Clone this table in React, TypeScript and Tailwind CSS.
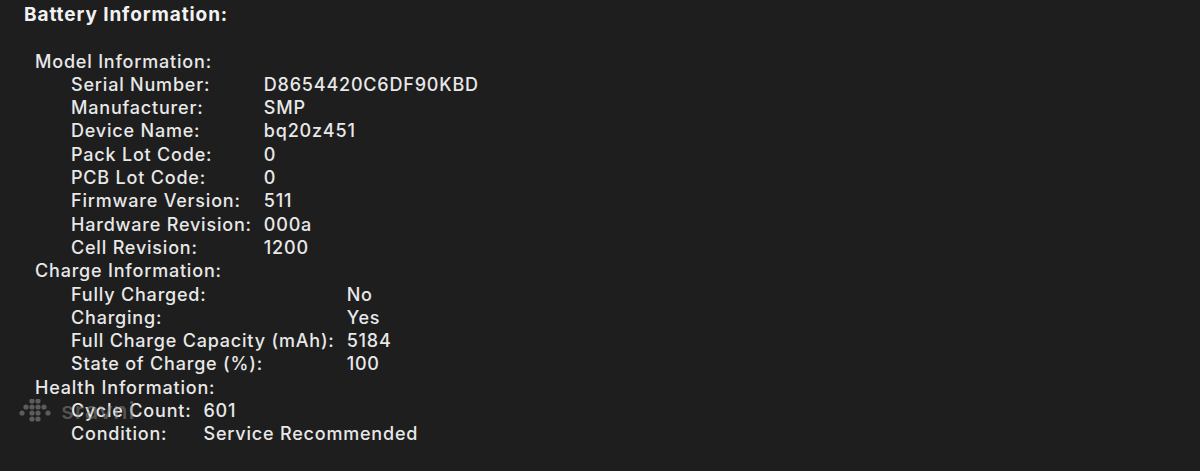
import React from "react";

type Row = [string, string];

const model: Row[] = [
  ["Serial Number:", "D8654420C6DF90KBD"],
  ["Manufacturer:", "SMP"],
  ["Device Name:", "bq20z451"],
  ["Pack Lot Code:", "0"],
  ["PCB Lot Code:", "0"],
  ["Firmware Version:", "511"],
  ["Hardware Revision:", "000a"],
  ["Cell Revision:", "1200"],
];

const charge: Row[] = [
  ["Fully Charged:", "No"],
  ["Charging:", "Yes"],
  ["Full Charge Capacity (mAh):", "5184"],
  ["State of Charge (%):", "100"],
];

const health: Row[] = [
  ["Cycle Count:", "601"],
  ["Condition:", "Service Recommended"],
];

function Section({ title, rows }: { title: string; rows: Row[] }) {
  return (
    <div className="pl-[35px]">
      <div>{title}</div>
      <div className="grid grid-cols-[max-content_max-content] gap-x-[12px] pl-[36px]">
        {rows.map(([k, v]) => (
          <React.Fragment key={k}>
            <div>{k}</div>
            <div>{v}</div>
          </React.Fragment>
        ))}
      </div>
    </div>
  );
}

export default function App() {
  return (
    <div
      className="relative w-[1200px] h-[471px] bg-[#1e1e1e] text-[#e8e8e8] text-[18px] font-medium tracking-[0.8px] leading-[23.3px] pt-[3px] overflow-hidden"
      style={{ fontFamily: "Inter, 'Liberation Sans', sans-serif" }}
    >
      <div className="pl-[24px] font-bold text-[19px] tracking-[0.9px] text-[#f2f2f2]">Battery Information:</div>
      <div className="h-[23.3px]" />
      <Section title="Model Information:" rows={model} />
      <Section title="Charge Information:" rows={charge} />
      <Section title="Health Information:" rows={health} />
      <div className="absolute left-[19px] top-[399px] flex items-center gap-[8px] opacity-50 pointer-events-none">
        <svg width="34" height="24" viewBox="0 0 34 24">
          {[
            [13, 3], [19, 3],
            [7, 9], [13, 9], [19, 9], [25, 9],
            [3, 15], [13, 15], [19, 15], [29, 15],
            [13, 21], [19, 21],
          ].map(([cx, cy], i) => (
            <circle key={i} cx={cx} cy={cy - 1} r="2.6" fill="#9a9a9a" />
          ))}
        </svg>
        <span className="text-[24px] text-[#8a8a8a] font-medium">sravni</span>
      </div>
    </div>
  );
}
